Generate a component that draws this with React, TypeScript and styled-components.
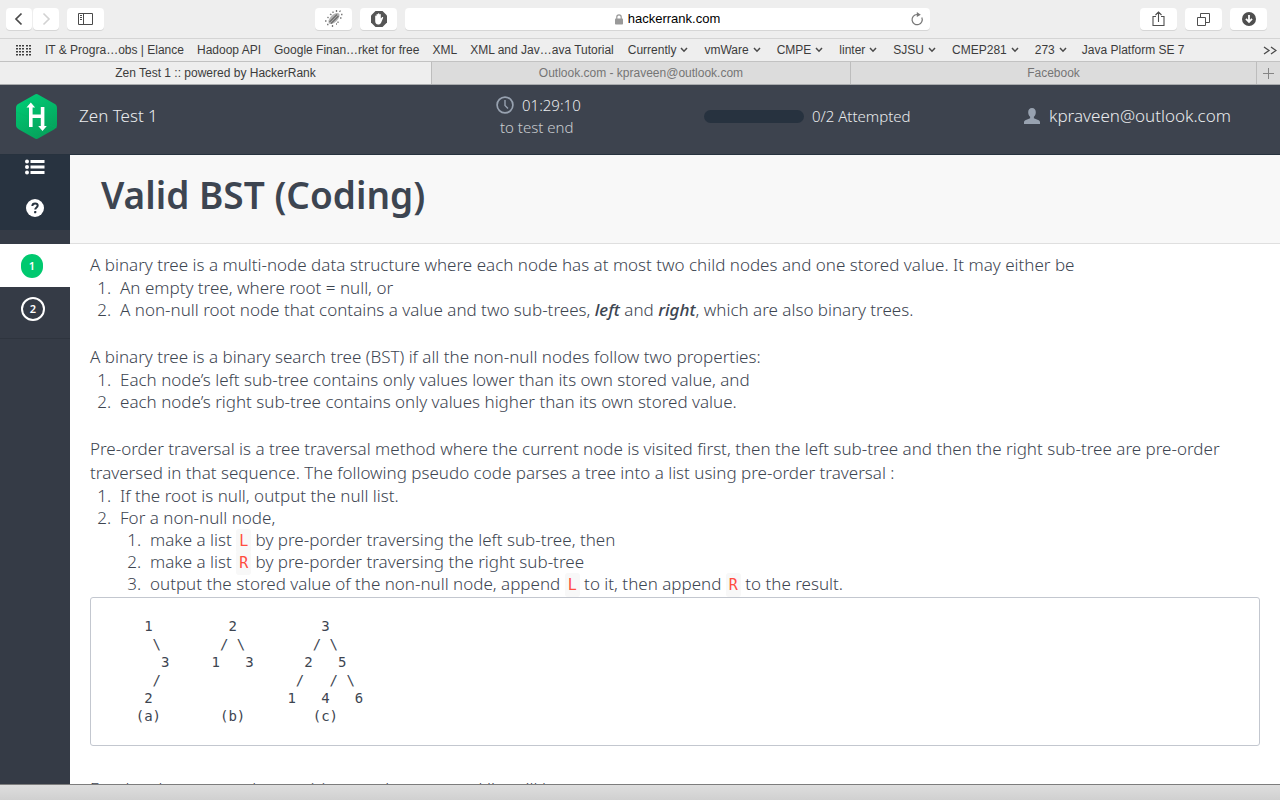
import React from "react";
import styled, { createGlobalStyle } from "styled-components";

const systemFont = `"Helvetica Neue", "Liberation Sans", Arial, sans-serif`;
const pageFont = `Whitney, "Noto Sans", "Open Sans", sans-serif`;
const monoFont = `"DejaVu Sans Mono", Menlo, monospace`;

const GlobalStyle = createGlobalStyle`
  *, *::before, *::after { box-sizing: border-box; }
  body { margin: 0; background: #ffffff; }
  button { font: inherit; color: inherit; border: 0; padding: 0; background: none; cursor: pointer; }
  a { color: inherit; text-decoration: none; }
  svg { display: block; flex: none; }
`;

const Window = styled.div`
  display: flex;
  flex-direction: column;
  height: 100vh;
  overflow: hidden;
`;

/* ---------- Browser chrome ---------- */

const Chrome = styled.div`
  flex: none;
  background: #eeeeee;
  color: #3c3c3c;
  font-family: ${systemFont};
  font-size: 12px;
`;

const Toolbar = styled.div`
  display: grid;
  grid-template-columns: minmax(0, 391fr) minmax(0, 525fr) minmax(0, 329fr);
  column-gap: 8px;
  padding: 8px 13px 8px 6px;
  border-bottom: 1px solid #d4d4d4;
`;

const ToolGroup = styled.div<{ $gap?: number }>`
  display: flex;
  gap: ${(p) => p.$gap ?? 8}px;
`;

const ToolSide = styled.div<{ $end?: boolean }>`
  display: flex;
  gap: 8px;
  justify-content: ${(p) => (p.$end ? "flex-end" : "flex-start")};
`;

const Spacer = styled.div`
  flex: 1;
`;

const ToolButton = styled.button<{ $narrow?: boolean }>`
  display: flex;
  align-items: center;
  justify-content: center;
  width: ${(p) => (p.$narrow ? 26 : 37)}px;
  height: 22px;
  border-radius: 4px;
  background: #ffffff;
  box-shadow: 0 1px 0 #d6d6d6;
`;

const AddressBar = styled.div`
  display: grid;
  grid-template-columns: 1fr auto 1fr;
  align-items: center;
  height: 22px;
  border-radius: 4px;
  background: #ffffff;
  box-shadow: 0 1px 0 #d6d6d6;
`;

const AddressField = styled.label`
  grid-column: 2;
  display: flex;
  align-items: center;
  gap: 5px;
`;

const AddressInput = styled.input`
  field-sizing: content;
  border: 0;
  padding: 0;
  background: none;
  color: #000000;
  font: 13px/22px ${systemFont};
  outline: none;
`;

const ReloadButton = styled.button`
  justify-self: end;
  margin-right: 6px;
`;

const Bookmarks = styled.nav`
  display: flex;
  align-items: center;
  height: 23px;
  padding: 0 3px 0 16px;
  border-bottom: 1px solid #c2c2c2;
  white-space: nowrap;
`;

const BookmarkList = styled.div`
  display: flex;
  flex: 1;
  gap: 13px;
  min-width: 0;
  margin-left: 14px;
  overflow: hidden;
  line-height: 22px;
`;

const BookmarkFolder = styled.button`
  display: flex;
  align-items: center;
  gap: 4px;
  padding: 0 2px 0 1px;
`;

const Tabs = styled.div`
  display: flex;
  height: 23px;
  border-bottom: 1px solid #a9abad;
`;

const Tab = styled.button<{ $grow: number; $active?: boolean }>`
  flex: ${(p) => p.$grow} 1 0;
  min-width: 0;
  border-right: 1px solid #bdbdbd;
  background: ${(p) => (p.$active ? "#eeeeee" : "#dcdcdc")};
  color: ${(p) => (p.$active ? "#3c3c3c" : "#757575")};
  line-height: 22px;
  text-align: center;
`;

const NewTab = styled.button`
  display: flex;
  align-items: center;
  justify-content: center;
  width: 23px;
  background: #dcdcdc;
`;

/* ---------- Test page ---------- */

const Header = styled.header`
  flex: none;
  display: grid;
  grid-template-columns: 31fr 13fr 20fr 16fr;
  align-items: center;
  height: 70px;
  padding-bottom: 7px;
  border-bottom: 1px solid #27323e;
  background: #3d434e;
  color: #e9ebed;
  font-family: ${pageFont};
  font-weight: 300;
  font-size: 15px;
  line-height: 22px;
`;

const Brand = styled.a`
  display: flex;
  align-items: center;
  gap: 22px;
  padding-left: 16px;
  font-size: 17px;
`;

const Timer = styled.div`
  display: flex;
  flex-direction: column;
`;

const TimerRow = styled.div`
  display: flex;
  align-items: center;
  gap: 8px;
`;

const TimerNote = styled.div`
  padding-left: 4px;
  color: #c9ccd0;
`;

const Attempted = styled.label`
  display: flex;
  align-items: center;
  gap: 8px;
`;

const Meter = styled.progress`
  appearance: none;
  width: 100px;
  height: 13px;
  border: 0;
  border-radius: 7px;
  overflow: hidden;
  background: #27323f;
  &::-webkit-progress-bar { background: #27323f; }
  &::-webkit-progress-value { background: #00c96f; }
`;

const Account = styled.a`
  display: flex;
  align-items: center;
  gap: 9px;
  font-size: 17px;
`;

const Workspace = styled.div`
  display: flex;
  flex: 1;
  min-height: 0;
`;

const Sidebar = styled.aside`
  flex: none;
  width: 70px;
  background: #353b46;
`;

const SidebarTools = styled.div`
  display: flex;
  flex-direction: column;
  align-items: center;
  gap: 24px;
  height: 75px;
  padding-top: 4px;
  background: #283340;
`;

const QuestionNav = styled.nav`
  padding: 14px 0 7px;
  border-bottom: 1px solid #2e343e;
`;

const QuestionLink = styled.a<{ $current?: boolean }>`
  display: flex;
  align-items: center;
  height: ${(p) => (p.$current ? 43 : 44)}px;
  padding-left: 21px;
  background: ${(p) => (p.$current ? "#ffffff" : "transparent")};
`;

const QuestionNumber = styled.span<{ $current?: boolean }>`
  display: flex;
  align-items: center;
  justify-content: center;
  width: ${(p) => (p.$current ? 22 : 24)}px;
  height: 24px;
  border: ${(p) => (p.$current ? "0" : "2px solid #ffffff")};
  border-radius: 12px;
  background: ${(p) => (p.$current ? "#00c96f" : "transparent")};
  color: #ffffff;
  font: 600 11px/20px ${pageFont};
`;

const Main = styled.main`
  flex: 1;
  min-width: 0;
  overflow: hidden;
  color: #3d4551;
  font-family: ${pageFont};
  font-size: 17px;
  font-weight: 300;
`;

const TitleBand = styled.div`
  padding: 12px 31px 20px;
  border-bottom: 1px solid #dfdfdf;
  background: #f8f8f8;
`;

const Title = styled.h1`
  margin: 0;
  font-size: 37px;
  line-height: 56px;
  font-weight: 600;
`;

const Statement = styled.article`
  padding: 9px 20px 0;
`;

const Paragraph = styled.p`
  margin: 0;
  line-height: 24px;
`;

const Steps = styled.ol<{ $spaced?: boolean }>`
  margin: 0 0 ${(p) => (p.$spaced ? 24 : 0)}px;
  padding-left: 30px;
  line-height: 22px;
`;

const Step = styled.li`
  &::marker { content: counter(list-item) ".\\00a0\\00a0"; }
`;

const Term = styled.em`
  font-weight: 500;
`;

const Code = styled.code`
  padding: 3px;
  border-radius: 3px;
  background: #f8f8f8;
  color: #ff4c40;
  font: 15px/15px ${monoFont};
`;

const Figure = styled.pre`
  margin: 2px 0 31px;
  padding: 19px 11px 20px;
  border: 1px solid #c3c7cf;
  border-radius: 3px;
  font: 14px/18px ${monoFont};
`;

const WindowEdge = styled.footer`
  flex: none;
  height: 16px;
  border-top: 1px solid #7d7d7d;
  background: linear-gradient(#dedede, #d0d0d0);
`;

/* ---------- Icons ---------- */

const BackIcon = () => (
  <svg width="10" height="14" viewBox="0 0 10 14" fill="none" stroke="#4a4a4a" strokeWidth="1.7">
    <path d="M7.5 1.5 2 7l5.500 5.500" />
  </svg>
);

const ForwardIcon = () => (
  <svg width="10" height="14" viewBox="0 0 10 14" fill="none" stroke="#d2d2d2" strokeWidth="1.600">
    <path d="M2.500 1.500 8 7l-5.500 5.500" />
  </svg>
);

const PanelIcon = () => (
  <svg width="16" height="12" viewBox="0 0 16 12" fill="none" stroke="#4a4a4a">
    <path d="M.5.5h14v11H.5zM5.500.5v11M2 2.500h2M2 4.500h2M2 6.500h2" />
  </svg>
);

const BugIcon = () => (
  <svg width="20" height="20" viewBox="0 0 20 20">
    <ellipse cx="10" cy="9.500" rx="7" ry="3.600" transform="rotate(-45 10 9.500)" fill="#b4b4b4" />
    <path d="m5.500 13 7.500-7.500M7 14.500l7.500-7.500" stroke="#6c6c6c" strokeWidth="1.200" />
    <path
      d="M12.500 1v2M16.500 1.500l-1 1.500M18.500 5.500h-1.500M17.500 9h-1.500M14 12.500v1.500M3.500 8l1 1M6 5l1.500 1M9 2.500v1.500M1 12h1.500M3 15.500h1.500M8.500 16v2M12 15h1"
      stroke="#7a7a7a"
      strokeWidth="1.300"
    />
  </svg>
);

const HandIcon = () => (
  <svg width="18" height="18" viewBox="0 0 18 18">
    <path d="M5.500 1h7L17 5.500v7L12.500 17h-7L1 12.500v-7z" fill="#555" />
    <path
      d="M5.200 6.200c0-.9 1.200-.9 1.300 0V4.600c0-.9 1.300-.9 1.400 0V4c0-.9 1.500-.9 1.500 0v.6c.1-.9 1.400-.9 1.400 0v4l1-1.200c.7-.7 1.700-.2 1.300.6l-1.900 4.400c-.7 1.500-1.600 2.100-3 2.100-2 0-3-1.400-3-3.400z"
      fill="#fff"
    />
  </svg>
);

const LockIcon = () => (
  <svg width="8" height="11" viewBox="0 0 8 11">
    <path d="M1.800 5V3a2.200 2.200 0 0 1 4.400 0v2" fill="none" stroke="#999" strokeWidth="1.200" />
    <rect y="4.500" width="8" height="6" rx=".8" fill="#999" />
  </svg>
);

const ReloadIcon = () => (
  <svg width="14" height="14" viewBox="0 0 14 14">
    <path d="M11.800 5.500A5.100 5.100 0 1 1 7 2.500" fill="none" stroke="#777" strokeWidth="1.200" />
    <path d="M6.800 0v5l4-2.300z" fill="#777" />
  </svg>
);

const ShareIcon = () => (
  <svg width="13" height="16" viewBox="0 0 13 16" fill="none" stroke="#4f4f4f" strokeWidth="1.100">
    <path d="M4 5.500H1v9h11v-9H9M6.500 11V1M3.500 4l3-3 3 3" />
  </svg>
);

const TabsIcon = () => (
  <svg width="13" height="13" viewBox="0 0 13 13" fill="none" stroke="#4f4f4f">
    <path d="M.5 4.500h8v8h-8zM3.500 4V.5h9v9H9" />
  </svg>
);

const DownloadIcon = () => (
  <svg width="14" height="14" viewBox="0 0 14 14">
    <circle cx="7" cy="7" r="7" fill="#4f4f4f" />
    <path d="M7 3v6M4 6.800 7 10l3-3.200" fill="none" stroke="#fff" strokeWidth="1.800" />
  </svg>
);

const dotColumns = [0, 3, 6, 10, 13];
const dotRows = [0, 3, 6, 9];

const GridIcon = () => (
  <svg width="15" height="11" viewBox="0 0 15 11" fill="#3f3f3f">
    {dotRows.map((y) =>
      dotColumns.map((x) => <rect key={`${x}-${y}`} x={x} y={y} width="2" height="1.500" />)
    )}
  </svg>
);

const CaretIcon = () => (
  <svg width="8" height="6" viewBox="0 0 8 6" fill="none" stroke="#4a4a4a" strokeWidth="1.500">
    <path d="m1 1 3 3.200L7 1" />
  </svg>
);

const MoreIcon = () => (
  <svg width="14" height="9" viewBox="0 0 14 9" fill="none" stroke="#4a4a4a" strokeWidth="1.300">
    <path d="m1 1 5 3.500L1 8M8 1l5 3.500L8 8" />
  </svg>
);

const PlusIcon = () => (
  <svg width="11" height="11" viewBox="0 0 11 11" stroke="#858585">
    <path d="M5.500 0v11M0 5.500h11" />
  </svg>
);

const Logo = () => (
  <svg width="41" height="45" viewBox="0 0 41 45">
    <defs>
      <linearGradient id="logo-fill" x1="0" y1="0" x2="0.500" y2="1">
        <stop offset="0" stopColor="#00d078" />
        <stop offset="1" stopColor="#05a35c" />
      </linearGradient>
    </defs>
    <path
      d="M18.500.7c1.200-.8 2.800-.8 4 0L38 9.600c2 1.200 3 2.100 3 4.400v17c0 2.300-1 3.200-3 4.400l-15.500 8.900c-1.200.8-2.800.8-4 0L3 35.400C1 34.200 0 33.300 0 31V14c0-2.300 1-3.200 3-4.400z"
      fill="url(#logo-fill)"
    />
    <path d="M0 18 41 34M0 27l30 12M10 6l31 12" stroke="#00b868" strokeOpacity=".35" />
    <path d="M13 12h3.600v8.500h8.200V13h3.600v20h-3.600v-9h-8.200v9H13z" fill="#fff" />
    <path d="M10.500 13.500 14.800 8.500l4.300 5zM22.200 32h8.600l-4.300 5z" fill="#fff" />
  </svg>
);

const ClockIcon = () => (
  <svg width="18" height="18" viewBox="0 0 18 18" fill="none" stroke="#98a2b0">
    <circle cx="9" cy="9" r="7.900" strokeWidth="1.700" />
    <path d="M9 4v5.500l3 3" strokeWidth="1.400" />
  </svg>
);

const UserIcon = () => (
  <svg width="16" height="16" viewBox="0 0 16 16" fill="#98a2b0">
    <path d="M8 0c2.500 0 3.800 1.700 3.800 4.200 0 2-.8 3.600-1.900 4.600v1.500l4.800 2c1 .5 1.300 1.300 1.300 2.200V16H0v-1.500c0-.9.300-1.700 1.300-2.200l4.800-2V8.800C5 7.800 4.200 6.200 4.200 4.200 4.200 1.700 5.500 0 8 0z" />
  </svg>
);

const ListIcon = () => (
  <svg width="20" height="16" viewBox="0 0 20 16" fill="#fff">
    <circle cx="2" cy="2.500" r="2" />
    <circle cx="2" cy="8" r="2" />
    <circle cx="2" cy="13.500" r="2" />
    <path d="M5.500 1h14v3h-14zM5.500 6.500h14v3h-14zM5.500 12h14v3h-14z" />
  </svg>
);

const HelpIcon = () => (
  <svg width="18" height="18" viewBox="0 0 18 18">
    <circle cx="9" cy="9" r="9" fill="#fff" />
    <path d="M6.300 7c.1-1.700 1.200-2.500 2.800-2.500 1.500 0 2.600.8 2.600 2.100 0 2-2.500 1.700-2.500 4" fill="none" stroke="#283340" strokeWidth="2" />
    <rect x="8.100" y="12" width="2.200" height="2.200" rx=".4" fill="#283340" />
  </svg>
);

/* ---------- Content ---------- */

const bookmarks = [
  { label: "IT & Progra…obs | Elance" },
  { label: "Hadoop API" },
  { label: "Google Finan…rket for free" },
  { label: "XML" },
  { label: "XML and Jav…ava Tutorial" },
  { label: "Currently", folder: true },
  { label: "vmWare", folder: true },
  { label: "CMPE", folder: true },
  { label: "linter", folder: true },
  { label: "SJSU", folder: true },
  { label: "CMEP281", folder: true },
  { label: "273", folder: true },
  { label: "Java Platform SE 7" },
];

const trees = [
  "     1         2          3",
  "      \\       / \\        / \\",
  "       3     1   3      2   5",
  "      /                /   / \\",
  "     2                1   4   6",
  "    (a)       (b)        (c)",
].join("\n");

export default function App() {
  return (
    <Window>
      <GlobalStyle />
      <Chrome>
        <Toolbar>
          <ToolSide>
            <ToolGroup $gap={1}>
              <ToolButton $narrow aria-label="Back"><BackIcon /></ToolButton>
              <ToolButton $narrow aria-label="Forward"><ForwardIcon /></ToolButton>
            </ToolGroup>
            <ToolButton aria-label="Show sidebar"><PanelIcon /></ToolButton>
            <Spacer />
            <ToolGroup>
              <ToolButton aria-label="Inspector"><BugIcon /></ToolButton>
              <ToolButton aria-label="Content blocker"><HandIcon /></ToolButton>
            </ToolGroup>
          </ToolSide>
          <AddressBar>
            <AddressField>
              <LockIcon />
              <AddressInput aria-label="Address" defaultValue="hackerrank.com" />
            </AddressField>
            <ReloadButton aria-label="Reload"><ReloadIcon /></ReloadButton>
          </AddressBar>
          <ToolSide $end>
            <ToolButton aria-label="Share"><ShareIcon /></ToolButton>
            <ToolButton aria-label="Show all tabs"><TabsIcon /></ToolButton>
            <ToolButton aria-label="Downloads"><DownloadIcon /></ToolButton>
          </ToolSide>
        </Toolbar>
        <Bookmarks>
          <button aria-label="Top sites"><GridIcon /></button>
          <BookmarkList>
            {bookmarks.map((b) =>
              b.folder ? (
                <BookmarkFolder key={b.label}>{b.label}<CaretIcon /></BookmarkFolder>
              ) : (
                <a key={b.label} href="#">{b.label}</a>
              )
            )}
          </BookmarkList>
          <button aria-label="More bookmarks"><MoreIcon /></button>
        </Bookmarks>
        <Tabs>
          <Tab $grow={432} $active>Zen Test 1 :: powered by HackerRank</Tab>
          <Tab $grow={419}>Outlook.com - kpraveen@outlook.com</Tab>
          <Tab $grow={406}>Facebook</Tab>
          <NewTab aria-label="New tab"><PlusIcon /></NewTab>
        </Tabs>
      </Chrome>

      <Header>
        <Brand href="#"><Logo />Zen Test 1</Brand>
        <Timer>
          <TimerRow><ClockIcon />01:29:10</TimerRow>
          <TimerNote>to test end</TimerNote>
        </Timer>
        <Attempted>
          <Meter value={0} max={2} />
          0/2 Attempted
        </Attempted>
        <Account href="#"><UserIcon />kpraveen@outlook.com</Account>
      </Header>

      <Workspace>
        <Sidebar>
          <SidebarTools>
            <button aria-label="All questions"><ListIcon /></button>
            <button aria-label="Help"><HelpIcon /></button>
          </SidebarTools>
          <QuestionNav>
            <QuestionLink href="#" $current><QuestionNumber $current>1</QuestionNumber></QuestionLink>
            <QuestionLink href="#"><QuestionNumber>2</QuestionNumber></QuestionLink>
          </QuestionNav>
        </Sidebar>
        <Main>
          <TitleBand><Title>Valid BST (Coding)</Title></TitleBand>
          <Statement>
            <Paragraph>
              A binary tree is a multi-node data structure where each node has at most two child nodes and one stored
              value. It may either be
            </Paragraph>
            <Steps $spaced>
              <Step>An empty tree, where root = null, or</Step>
              <Step>
                A non-null root node that contains a value and two sub-trees, <Term>left</Term> and <Term>right</Term>,
                which are also binary trees.
              </Step>
            </Steps>
            <Paragraph>
              A binary tree is a binary search tree (BST) if all the non-null nodes follow two properties:
            </Paragraph>
            <Steps $spaced>
              <Step>Each node’s left sub-tree contains only values lower than its own stored value, and</Step>
              <Step>each node’s right sub-tree contains only values higher than its own stored value.</Step>
            </Steps>
            <Paragraph>
              Pre-order traversal is a tree traversal method where the current node is visited first, then the left
              sub-tree and then the right sub-tree are pre-order traversed in that sequence. The following pseudo code
              parses a tree into a list using pre-order traversal :
            </Paragraph>
            <Steps>
              <Step>If the root is null, output the null list.</Step>
              <Step>
                For a non-null node,
                <Steps>
                  <Step>make a list <Code>L</Code> by pre-porder traversing the left sub-tree, then</Step>
                  <Step>make a list <Code>R</Code> by pre-porder traversing the right sub-tree</Step>
                  <Step>
                    output the stored value of the non-null node, append <Code>L</Code> to it, then append{" "}
                    <Code>R</Code> to the result.
                  </Step>
                </Steps>
              </Step>
            </Steps>
            <Figure>{trees}</Figure>
            <Paragraph>For the above example, tree (c) pre-order traversed list will be</Paragraph>
          </Statement>
        </Main>
      </Workspace>
      <WindowEdge />
    </Window>
  );
}
